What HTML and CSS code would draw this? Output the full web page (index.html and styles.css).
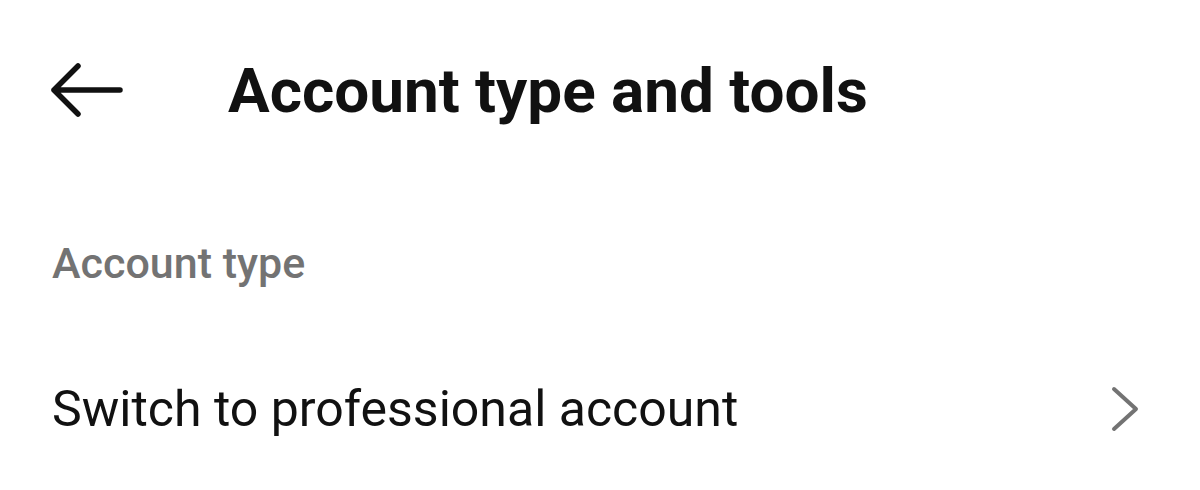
FILE: index.html
```html
<!DOCTYPE html>
<html lang="en">
<head>
    <meta charset="UTF-8">
    <meta name="viewport" content="width=device-width, initial-scale=1.0">
    <title>Account type and tools</title>
    <link rel="stylesheet" href="styles.css">
</head>
<body>
    <header class="top-bar">
        <button class="back-button" aria-label="Back">
            <svg width="74" height="56" viewBox="0 0 74 56" fill="none" stroke="#111" stroke-width="5.5" stroke-linecap="round" stroke-linejoin="round">
                <path d="M70 28H4M28 4L4 28l24 24"/>
            </svg>
        </button>
        <h1 class="page-title">Account type and tools</h1>
    </header>

    <section class="settings-group">
        <h2 class="group-label">Account type</h2>
        <a class="settings-row" href="#">
            <span class="row-text">Switch to professional account</span>
            <svg class="chevron" width="30" height="46" viewBox="0 0 30 46" fill="none" stroke="#737373" stroke-width="4" stroke-linecap="round" stroke-linejoin="round">
                <path d="M4 3l22 20L4 43"/>
            </svg>
        </a>
    </section>
</body>
</html>
```

FILE: styles.css
```css
body {
    margin: 0;
    font-family: Roboto, "Noto Sans", sans-serif;
    background-color: #fff;
    color: #111;
}

.top-bar {
    display: flex;
    align-items: center;
    height: 180px;
    padding: 0 0 0 50px;
}

.back-button {
    display: flex;
    padding: 0;
    border: none;
    background: none;
    cursor: pointer;
}

.page-title {
    margin: 0 0 0 104px;
    font-size: 62px;
    font-weight: 700;
    letter-spacing: 0;
}

.settings-group {
    padding: 0 50px 0 52px;
}

.group-label {
    margin: 0;
    padding-top: 58px;
    font-size: 43px;
    font-weight: 500;
    color: #737373;
}

.settings-row {
    display: flex;
    align-items: center;
    justify-content: space-between;
    margin-top: 92px;
    color: #111;
    text-decoration: none;
}

.row-text {
    font-size: 50px;
}

.chevron {
    margin-right: 10px;
}
```
